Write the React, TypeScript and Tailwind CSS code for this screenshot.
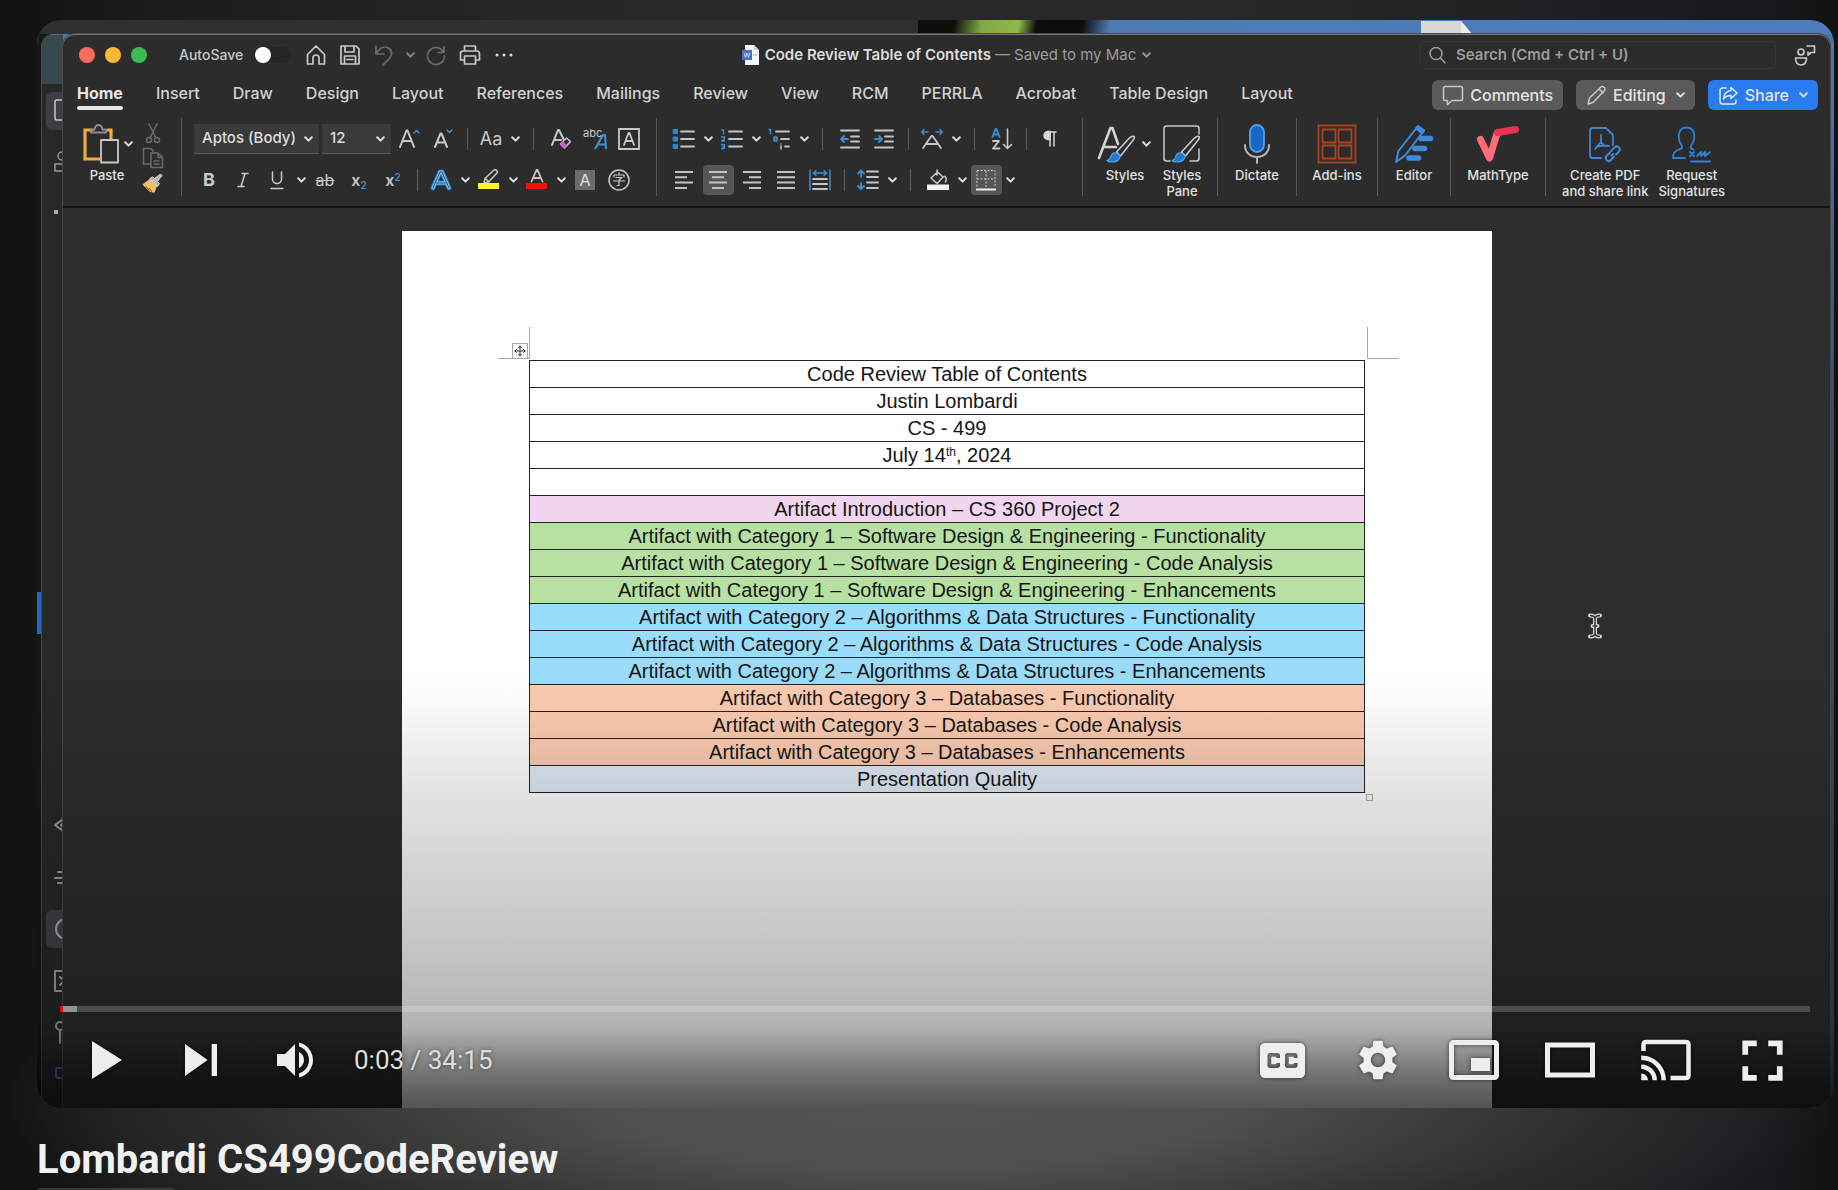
import React from "react";
import { MdCast, MdFullscreen, MdSettings, MdSkipNext, MdVolumeUp } from "react-icons/md";

type Kids = { children?: React.ReactNode };

const GREY = "#c9c9c9";
const BLUE = "#3d8fd1";

/* ---------- small building blocks ---------- */

function Svg({ w = 24, h = 24, stroke = GREY, sw = 1.5, children }: Kids & { w?: number; h?: number; stroke?: string; sw?: number }) {
  return (
    <svg width={w} height={h} viewBox={`0 0 ${w} ${h}`} fill="none" stroke={stroke} strokeWidth={sw} strokeLinecap="round" strokeLinejoin="round" aria-hidden="true" className="shrink-0">
      {children}
    </svg>
  );
}

function Tool({ label, active, children }: Kids & { label: string; active?: boolean }) {
  return (
    <button type="button" aria-label={label} className="flex h-[30px] w-[34px] shrink-0 items-center justify-center">
      <span className={active ? "flex h-[30px] w-[31px] items-center justify-center rounded bg-[#565656]" : "flex items-center justify-center"}>{children}</span>
    </button>
  );
}

function Chevron() {
  return (
    <svg width="9" height="6" viewBox="0 0 9 6" fill="none" stroke="#dcdcdc" strokeWidth="2" strokeLinecap="round" strokeLinejoin="round" aria-hidden="true">
      <path d="M1.2 1.2 4.5 4.6 7.8 1.2" />
    </svg>
  );
}

function More({ label }: { label: string }) {
  return (
    <button type="button" aria-label={label} className="flex h-[30px] w-3.5 shrink-0 items-center justify-center">
      <Chevron />
    </button>
  );
}

function Sep({ wide }: { wide?: boolean }) {
  return (
    <span className={wide ? "flex w-[22px] shrink-0 justify-center" : "flex w-3.5 shrink-0 justify-center"}>
      <span className="h-[22px] w-px bg-[#5a5a5a]" />
    </span>
  );
}

function Big({ label, className, icon, more }: { label: string; className: string; icon: React.ReactNode; more?: boolean }) {
  return (
    <div className={`flex flex-col items-center ${className}`}>
      <div className="flex h-10 items-center gap-1">
        <button type="button" aria-label={label}>{icon}</button>
        {more && <More label={`${label} options`} />}
      </div>
      <span className="mt-[3px] text-center text-[13px] leading-4 font-medium whitespace-pre-line text-[#e2e2e2]">{label}</span>
    </div>
  );
}

/* ---------- ribbon icons ---------- */

function Lines({ rows }: { rows: [number, number][] }) {
  return (
    <Svg w={20} h={20} sw={2} stroke="#c4c4c4">
      {rows.map(([a, b], i) => (
        <path key={i} d={`M${a} ${2 + i * 5.3}H${b}`} strokeLinecap="butt" />
      ))}
    </Svg>
  );
}

const PasteIcon = (
  <Svg w={36} h={40} sw={1.8}>
    <path d="M9 6H2v29h14M25 6h3v9" stroke="#f0ab3f" strokeWidth="3.2" strokeLinejoin="miter" />
    <path d="M8 8.500V5.500h3.500C12 2.500 13.500 1 15.500 1s3.500 1.500 4 4.500H23v3z" stroke="#8d8d8d" />
    <path d="M18 16h17v22.500H18z" fill="#2c2c2c" />
  </Svg>
);

const BrushIcon = (
  <Svg w={22} h={22}>
    <path d="M9.500 6.500 15 12l-3 8-4-1-6.500-6.500z" fill="#f2bd68" stroke="#f2bd68" />
    <path d="M4 14.500l3 3.500M7.500 16.500l2 3" stroke="#7a5520" strokeWidth="1" />
    <path d="m8 7 7.500 7.500 2-3-2-2 4.500-6-1.500-1.500-6 4.500-1.500-1.500z" fill="#b9b9b9" stroke="#d6d6d6" strokeWidth="1" />
  </Svg>
);

const StylesBrush = (
  <>
    <path d="M37 12.500c-2-1.200-3.500.5-5 2L19.500 28l4 4L35 17.500c1.500-2 3.500-3.500 2-5z" fill="#2c2c2c" stroke="#d0d0d0" strokeWidth="1.500" />
    <path d="M23 31.500c.5 4-3 6.500-8 6.500-2 0-4-.5-5-1.500 3-.5 3-2 4-4.500 1.500-4 6-4.500 9-.5z" fill="#1f7ad1" stroke="#5aa6e6" strokeWidth="1.200" />
  </>
);

function StylesIcon() {
  return (
    <Svg w={39} h={40}>
      <path d="M2 34 13.500 4h2L21 20M7 23h12" strokeWidth="2.600" stroke="#d4d4d4" />
      {StylesBrush}
    </Svg>
  );
}

function StylesPaneIcon() {
  return (
    <Svg w={40} h={40}>
      <path d="M8 37H4.500A2.500 2.500 0 0 1 2 34.500v-30A2.500 2.500 0 0 1 4.500 2h30A2.500 2.500 0 0 1 37 4.500V10M37 25v9.500A2.500 2.500 0 0 1 34.500 37H28" />
      {StylesBrush}
    </Svg>
  );
}

const MicIcon = (
  <Svg w={28} h={40} sw={1.8}>
    <rect x="7" y="1" width="14" height="27" rx="7" fill="#1668c4" stroke="#55a0e0" />
    <path d="M2 21c0 7.500 5 12 12 12s12-4.500 12-12M14 33v6" stroke="#b5b5b5" strokeWidth="2" />
  </Svg>
);

const AddInsIcon = (
  <Svg w={40} h={40} stroke="#a8431d" sw={1.8}>
    <path d="M1.500 1.500h37v37h-37zM5.500 5.500h13v13h-13zM21.500 5.500h13v13h-13zM5.500 21.500h13v13h-13zM21.500 21.500h13v13h-13z" strokeLinejoin="miter" />
  </Svg>
);

const EditorIcon = (
  <Svg w={40} h={40} stroke="#3b8be0" sw={2}>
    <path d="M27 14.500h9.500M21 24.500h9.500M15 34h9.500" strokeWidth="5.500" />
    <path d="M2 38 4.500 27 24 2l6 4.500-19 25z" fill="#2c2c2c" />
    <path d="M22 4.500 24 2l6 4.500-2 3z" fill="#3b8be0" />
  </Svg>
);

const MathIcon = (
  <Svg w={42} h={40}>
    <path d="M3.500 15.500 12.500 34 20 9.500" stroke="#ff6b7a" strokeWidth="7" />
    <path d="M20.500 8.500 38.500 5.500" stroke="#ea3350" strokeWidth="7" />
  </Svg>
);

const PdfIcon = (
  <Svg w={36} h={40} stroke="#4084d8" sw={1.8}>
    <path d="M14 34H6a3 3 0 0 1-3-3V7a3 3 0 0 1 3-3h13l7 7v10" />
    <path d="M14 11v7l-6 7M14 18l3 3.500 5 .500M10 22.500l7-1" />
    <path d="m24 27 3.500-3.500c3-3 7 1 4.500 4L29 30.500M26 30l-1.500 1.500M27 32.500 24 36c-3 3-7-1-4.500-4l3.500-3.500" strokeWidth="2" />
  </Svg>
);

const SignIcon = (
  <Svg w={42} h={40} stroke="#2f80e0" sw={1.8}>
    <path d="M14 34H2c0-5 1.500-6.500 5-8 4-1.500 5-2.500 3.500-5C6.500 16 6 3.500 15.500 3.500S24.500 16 20.500 21c-1.500 2.500-1 3.500 2 4.500" />
    <path d="m19 28 4 4m0-4-4 4M26 32l4-4v4l4-4v4l5-4M20 37.500h19" />
  </Svg>
);

/* ---------- Word window ---------- */

const TABS = ["Home", "Insert", "Draw", "Design", "Layout", "References", "Mailings", "Review", "View", "RCM", "PERRLA", "Acrobat", "Table Design", "Layout"];

function TitleBar() {
  return (
    <div className="grid h-10 grid-cols-[1fr_auto_1fr] items-center pt-0.5">
      <div className="flex items-center pl-4">
        <div className="flex gap-2.5">
          <button type="button" aria-label="Close" className="size-4 rounded-full bg-[#fd6a5e]" />
          <button type="button" aria-label="Minimize" className="size-4 rounded-full bg-[#fdb92f]" />
          <button type="button" aria-label="Zoom" className="size-4 rounded-full bg-[#39bc52]" />
        </div>
        <label className="ml-8 flex items-center gap-3 text-sm font-medium text-[#c8c8c8]">
          AutoSave
          <input type="checkbox" role="switch" className="peer sr-only" />
          <span className="flex h-4 w-9 rounded-full bg-[#262626]">
            <span className="size-4 rounded-full bg-white" />
          </span>
        </label>
        <div className="ml-2 flex">
          <Tool label="Home">
            <Svg sw={1.7}><path d="M3.500 11.500 12 3l8.500 8.500v9.500H15v-6a3 3 0 0 0-6 0v6H3.500z" /></Svg>
          </Tool>
          <Tool label="Save">
            <Svg sw={1.7}><path d="M3 3h15l3 3v15H3zM7 3v6h9V3M6.500 21v-8h11v8M9 16.500h6" /></Svg>
          </Tool>
          <Tool label="Undo">
            <Svg stroke="#6c6c6c" sw={1.7}><path d="M4 3v8h8M4 10.500C8 4 13 2.500 17 5.500s3 7.500 0 10.500L11 22" /></Svg>
          </Tool>
          <span className="flex w-[18px] items-center justify-center opacity-50"><Chevron /></span>
          <Tool label="Redo">
            <Svg stroke="#6c6c6c" sw={1.7}><path d="M20 3.500v6h-6M19.500 9A8.500 8.500 0 1 0 20.500 13" /></Svg>
          </Tool>
          <Tool label="Print">
            <Svg sw={1.7}><path d="M6.500 8V3h11v5M6.500 17H2.500V10.500a2.500 2.500 0 0 1 2.500-2.500h14a2.500 2.500 0 0 1 2.500 2.500V17h-4M6.500 13h11v8h-11z" /></Svg>
          </Tool>
          <Tool label="More commands">
            <Svg w={18} h={6}><path d="M2 3h.01M9 3h.01M16 3h.01" strokeWidth="3" stroke="#dcdcdc" /></Svg>
          </Tool>
        </div>
      </div>
      <div className="flex items-center text-[15px] text-[#9d9d9d]">
        <svg width="17" height="20" viewBox="0 0 17 20" className="mr-1.5" aria-hidden="true">
          <path d="M3 0h9l5 5v15H3z" fill="#f4f6fb" />
          <path d="M12 0v5h5z" fill="#c5cde0" />
          <path d="M0 5h10v10H0z" fill="#4a6fc4" />
          <path d="m2 7.500 1.500 5L5 8l1.500 4.500 1.500-5" stroke="#c8d6f5" fill="none" />
          <path d="M11 10h4" stroke="#9bb0e0" />
        </svg>
        <span className="font-semibold text-[#dedede]">Code Review Table of Contents</span>
        <span className="mr-1.5 ml-1">— Saved to my Mac</span>
        <span className="opacity-60"><Chevron /></span>
      </div>
      <div className="flex items-center justify-end gap-[18px] pr-3.5">
        <label className="flex h-7 w-[356px] items-center gap-2.5 rounded border border-[#353535] pl-2">
          <Svg w={17} h={19} stroke="#9c9c9c"><path d="M13 7.500a6 6 0 1 1-12 0 6 6 0 0 1 12 0M11.500 12l4.500 5" /></Svg>
          <input type="search" aria-label="Search" placeholder="Search (Cmd + Ctrl + U)" className="min-w-0 flex-1 bg-transparent text-[15px] font-semibold outline-none placeholder:text-[#9c9c9c]" />
        </label>
        <button type="button" aria-label="Collaborators">
          <Svg w={22} h={22} sw={1.7}>
            <circle cx="7" cy="8" r="3" />
            <path d="M1.500 14h11c0 4.500-2 7-5.500 7s-5.500-2.500-5.500-7zM13 2h7.500v6.500H17l-3 2.500V8" />
          </Svg>
        </button>
      </div>
    </div>
  );
}

function TabRow() {
  return (
    <div className="flex h-[42px] items-start justify-between pr-3 pl-3.5">
      <nav aria-label="Ribbon tabs" className="flex items-start gap-[33px] pt-[7px]">
        {TABS.map((t, i) => (
          <button key={i} type="button" className={i === 0 ? "text-base leading-6 font-bold text-[#e6e6e6]" : "text-base leading-6 font-medium text-[#d2d2d2]"}>
            {t}
            {i === 0 && <span className="mt-px block h-1 rounded-full bg-[#e6e6e6]" />}
          </button>
        ))}
      </nav>
      <div className="flex gap-[13px] pt-1.5 text-base font-medium text-[#e4e4e4]">
        <button type="button" className="flex h-[30px] items-center gap-1.5 rounded-md bg-[#5a5a5a] px-2.5">
          <Svg w={22} h={22}><path d="M3 2.500h16a1.500 1.500 0 0 1 1.500 1.500v11a1.500 1.500 0 0 1-1.500 1.500H10l-4.500 4v-4H3A1.500 1.500 0 0 1 1.500 15V4A1.500 1.500 0 0 1 3 2.500z" /></Svg>
          Comments
        </button>
        <button type="button" className="flex h-[30px] items-center gap-1.5 rounded-md bg-[#5a5a5a] px-2.5">
          <Svg w={21} h={21}><path d="m2 19 1.500-6L15 2c2-1.500 5 1 3.500 3.500L7 17.500zM13 4l4 4" /></Svg>
          <span className="mr-1">Editing</span>
          <Chevron />
        </button>
        <button type="button" className="flex h-[30px] items-center gap-1.5 rounded-md bg-[#2a7bf0] px-2.5">
          <Svg w={21} h={21} stroke="#e4ecf8"><path d="M8 3H4.500A2.500 2.500 0 0 0 2 5.500v11A2.500 2.500 0 0 0 4.500 19h11a2.500 2.500 0 0 0 2.500-2.500V15M13 2.500 19 8l-6 5.500v-3c-3.500 0-5.500 1-7.500 3.500.5-5 3-8 7.500-8.500z" /></Svg>
          <span className="mr-1">Share</span>
          <Chevron />
        </button>
      </div>
    </div>
  );
}

function Pick({ label, value, className }: { label: string; value: string; className: string }) {
  return (
    <label className={`flex h-[30px] items-center border-b border-[#585858] bg-[#3a3a3a] pr-1.5 pl-2 ${className}`}>
      <select aria-label={label} defaultValue={value} className="min-w-0 flex-1 appearance-none bg-transparent text-[15px] font-medium text-[#dedede] outline-none">
        <option>{value}</option>
      </select>
      <Chevron />
    </label>
  );
}

function FontGroup() {
  return (
    <div className="flex h-[78px] flex-col gap-[11px] border-l border-[#555] pt-1.5 pr-2.5 pl-2.5">
      <div className="flex items-center pl-0.5">
        <Pick label="Font" value="Aptos (Body)" className="mr-[3px] w-[125px]" />
        <Pick label="Font size" value="12" className="mr-px w-[69px]" />
        <Tool label="Increase font size">
          <Svg><path d="M3 20 9.500 3.500h1L17 20M5.500 14h9" strokeWidth="2" /><path d="m17 6 2.500-2.500L22 6" stroke={BLUE} /></Svg>
        </Tool>
        <Tool label="Decrease font size">
          <Svg><path d="M4 20 9.500 6.500h1L16 20M6 15.500h8" strokeWidth="2" /><path d="m16 3 2.500 2.500L21 3" stroke={BLUE} /></Svg>
        </Tool>
        <Sep />
        <Tool label="Change case"><span className="text-lg text-[#c9c9c9]">Aa</span></Tool>
        <More label="Case options" />
        <Sep wide />
        <Tool label="Clear formatting">
          <Svg><path d="M3 18 9 3h1l4.500 9M5 13h7" strokeWidth="2" /><path d="m11.500 17 6-6 4 3.500-6 6.500z" /><path d="m11.500 17 2-2 4 4-2 2z" fill="#c455c4" stroke="#d06ad0" /></Svg>
        </Tool>
        <Tool label="Text style">
          <svg width="26" height="24" viewBox="0 0 26 24" fill="none" aria-hidden="true">
            <text x="1" y="10" fontSize="11" fill={GREY} fontFamily="Inter, sans-serif">abc</text>
            <path d="m13 22 8-14h2l1 14M15.500 17.500h8" stroke={BLUE} strokeWidth="2.200" />
          </svg>
        </Tool>
        <Tool label="Character border">
          <Svg><path d="M2 2h20v20H2z" strokeWidth="1.800" strokeLinejoin="miter" /><path d="m7 18 4.500-12h1L17 18M8.500 14h7" strokeWidth="1.800" /></Svg>
        </Tool>
      </div>
      <div className="flex items-center text-[#c9c9c9]">
        <Tool label="Bold"><span className="text-lg font-bold">B</span></Tool>
        <Tool label="Italic"><Svg w={14} h={16}><path d="M6 1.500h6M2 14.500h6M9 1.500 5 14.500" /></Svg></Tool>
        <Tool label="Underline"><Svg w={14} h={20}><path d="M2.500 2v7c0 6 9 6 9 0V2M1 18.500h12" /></Svg></Tool>
        <More label="Underline options" />
        <Tool label="Strikethrough"><span className="text-base line-through">ab</span></Tool>
        <Tool label="Subscript"><span className="text-base font-semibold">x<sub className="text-[10px] text-[#3d8fd1]">2</sub></span></Tool>
        <Tool label="Superscript"><span className="text-base font-semibold">x<sup className="text-[10px] text-[#3d8fd1]">2</sup></span></Tool>
        <Sep />
        <Tool label="Text effects">
          <Svg><path d="M4 20 11 4h2l7 16M7.500 15h9" stroke="#2277c8" strokeWidth="5" /><path d="M4 20 11 4h2l7 16M7.500 15h9" stroke="#8cc4f0" strokeWidth="3" /><path d="M4 20 11 4h2l7 16M7.500 15h9" stroke="#1c4e80" strokeWidth="1" /></Svg>
        </Tool>
        <More label="Text effect options" />
        <Tool label="Highlight">
          <Svg><path d="m7 14 1.500-4L17 2c2-1 4 1 3 3l-8 8.500L8 15zM8 10l4 4" /><path d="M1 15h21v6H1z" fill="#f8f32a" stroke="none" /></Svg>
        </Tool>
        <More label="Highlight colors" />
        <Tool label="Font color">
          <Svg><path d="m6.500 13.500 5-11.500h1l5 11.500M8 10h8" strokeWidth="1.800" /><path d="M1 15h21v6H1z" fill="#f4100c" stroke="none" /></Svg>
        </Tool>
        <More label="Font colors" />
        <Tool label="Character shading"><span className="flex size-5 items-center justify-center bg-[#6b6b6b] text-base text-[#e0e0e0]">A</span></Tool>
        <Tool label="Enclose characters">
          <Svg><circle cx="12" cy="12" r="10" /><path d="M12 4.500v2M7 9V7h10v2M9 9.500h6l-3 2.500v5.500h-2M6.500 13h11" strokeWidth="1.200" /></Svg>
        </Tool>
      </div>
    </div>
  );
}

function ParagraphGroup() {
  const rows = <path d="M9 4.500h13M9 12h13M9 19.500h13" stroke="#c4c4c4" strokeWidth="1.800" />;
  return (
    <div className="flex h-[78px] flex-col gap-[11px] border-l border-[#555] pt-1.5 pr-[15px] pl-2.5">
      <div className="flex items-center">
        <Tool label="Bullets">
          <Svg>{rows}<path d="M1.500 2.500h4v4h-4zM1.500 10h4v4h-4zM1.500 17.500h4v4h-4z" fill="#2f86cf" stroke="#2f86cf" strokeWidth="1" /></Svg>
        </Tool>
        <More label="Bullet options" />
        <Tool label="Numbering">
          <Svg>{rows}<path d="M2 3h1.500v4M1.500 10h3v2l-3 2h3M1.500 17.500h3v4h-3m1-2h2" stroke={BLUE} strokeWidth="1.300" /></Svg>
        </Tool>
        <More label="Numbering options" />
        <Tool label="Multilevel list">
          <Svg><path d="M8 4.500h13M13 12h8M17 19.500h4" stroke="#c4c4c4" strokeWidth="1.800" /><path d="M1 2.500h1.500v4M6 14v-4h3v4H6m0-2h3" stroke={BLUE} strokeWidth="1.500" /><path d="M13 17v.1M13 19v3" /></Svg>
        </Tool>
        <More label="List options" />
        <Sep wide />
        <Tool label="Decrease indent">
          <Svg><path d="M3 3.500h18M13 9.500h8M13 14.500h8M3 20.500h18" stroke="#c4c4c4" strokeWidth="1.800" /><path d="M10 12H3m3-3-3 3 3 3" stroke={BLUE} strokeWidth="1.800" /></Svg>
        </Tool>
        <Tool label="Increase indent">
          <Svg><path d="M3 3.500h18M13 9.500h8M13 14.500h8M3 20.500h18" stroke="#c4c4c4" strokeWidth="1.800" /><path d="M3 12h7M7 9l3 3-3 3" stroke={BLUE} strokeWidth="1.800" /></Svg>
        </Tool>
        <Sep />
        <Tool label="Text direction">
          <Svg><path d="m3 21 8.500-12h1L21 21M7 17h10" strokeWidth="1.800" /><path d="M8 5H1.500M4 2.500 1.500 5 4 7.500M16 5h6.500M20 2.500 22.500 5 20 7.500" stroke={BLUE} /></Svg>
        </Tool>
        <More label="Text direction options" />
        <Sep wide />
        <Tool label="Sort">
          <Svg><path d="M2.500 10 5.500 2h1l3 8M3.500 7.500h5" stroke={BLUE} strokeWidth="1.800" /><path d="M3 14h6l-6 7.500h6.500" strokeWidth="1.800" /><path d="M17.500 2v19M13.500 17.500l4 4 4-4" strokeWidth="1.600" /></Svg>
        </Tool>
        <Sep />
        <Tool label="Show paragraph marks">
          <Svg w={16} h={18}><path d="M8 2v14M12 2v14M7 2h7" stroke="#d6d6d6" /><path d="M8 1.500H6a4 4 0 0 0 0 8h2z" fill="#d6d6d6" stroke="#d6d6d6" /></Svg>
        </Tool>
      </div>
      <div className="flex items-center">
        <Tool label="Align left"><Lines rows={[[1, 19], [1, 13], [1, 19], [1, 13]]} /></Tool>
        <Tool label="Center" active><Lines rows={[[1, 19], [4, 16], [1, 19], [4, 16]]} /></Tool>
        <Tool label="Align right"><Lines rows={[[1, 19], [7, 19], [1, 19], [7, 19]]} /></Tool>
        <Tool label="Justify"><Lines rows={[[1, 19], [1, 19], [1, 19], [1, 19]]} /></Tool>
        <Tool label="Distribute">
          <Svg><path d="M2 2v20M22 2v20M5 5h14M8 2.500 5.500 5 8 7.500M16 2.500 18.500 5 16 7.500" stroke={BLUE} /><path d="M5 11h14M5 16h14M5 21h14" stroke="#c4c4c4" strokeWidth="1.800" /></Svg>
        </Tool>
        <Sep />
        <Tool label="Line spacing">
          <Svg><path d="M11 3.500h11M11 9h11M11 14.500h11M11 20h11" stroke="#c4c4c4" strokeWidth="1.800" /><path d="M5 3v6M2 5.500 5 2.500l3 3M5 21v-6M2 18l3 3 3-3" stroke={BLUE} strokeWidth="1.800" /></Svg>
        </Tool>
        <More label="Line spacing options" />
        <Sep wide />
        <Tool label="Shading">
          <Svg><path d="M11 2v5M5 10l6.500-6 5.500 5-6 6.500zM17 9c3-2 4 2 2.500 5" /><path d="M1 16.500h22V22H1z" fill="#f2f2f2" stroke="none" /></Svg>
        </Tool>
        <More label="Shading colors" />
        <Tool label="Borders" active>
          <Svg><path d="M3 2.500h18v17M3 2.500v17M12 3v16M3 11h18" strokeDasharray="2 1.500" strokeWidth="1" strokeLinecap="butt" /><path d="M2 21.500h20" stroke="#f0f0f0" strokeWidth="2" strokeLinecap="butt" /></Svg>
        </Tool>
        <More label="Border options" />
      </div>
    </div>
  );
}

function Ribbon() {
  return (
    <div className="flex h-[92px] border-b-2 border-[#131313] pt-0.5">
      <div className="flex h-[78px] w-[118px] pt-1.5 pl-5">
        <div className="w-12">
          <div className="flex h-10 items-center gap-0.5">
            <button type="button" aria-label="Paste">{PasteIcon}</button>
            <More label="Paste options" />
          </div>
          <span className="mt-[3px] block w-12 text-center text-[13px] leading-4 font-medium text-[#e2e2e2]">Paste</span>
        </div>
        <div className="-mt-1.5 ml-1.5 flex flex-col pt-0.5">
          <button type="button" aria-label="Cut" className="flex h-[27px] w-8 items-center justify-center">
            <Svg w={16} h={22} stroke="#6a6a6a"><path d="M4 2l7 14M12 2 5 16" /><circle cx="4" cy="18" r="2.500" /><circle cx="12" cy="18" r="2.500" /></Svg>
          </button>
          <button type="button" aria-label="Copy" className="flex h-[27px] w-8 items-center justify-center">
            <Svg w={22} h={22} stroke="#6a6a6a"><path d="M8 17H1.500V1.500H9l2 2V6M9 6h7l4.500 4.500v10H9zM16 6v4.500h4.500M12 14h5M12 17h5" /></Svg>
          </button>
          <button type="button" aria-label="Format painter" className="flex h-[27px] w-8 items-center justify-center">{BrushIcon}</button>
        </div>
      </div>
      <FontGroup />
      <ParagraphGroup />
      <div className="flex h-[78px] border-l border-[#555] pt-1.5 pr-2.5 pl-2.5">
        <Big label="Styles" className="w-16" icon={<StylesIcon />} more />
        <Big label={"Styles\nPane"} className="w-[50px]" icon={<StylesPaneIcon />} />
      </div>
      <Big label="Dictate" className="h-[78px] w-[79px] border-l border-[#555] pt-1.5" icon={MicIcon} />
      <Big label="Add-ins" className="h-[78px] w-[81px] border-l border-[#555] pt-1.5" icon={AddInsIcon} />
      <Big label="Editor" className="h-[78px] w-[73px] border-l border-[#555] pt-1.5" icon={EditorIcon} />
      <Big label="MathType" className="h-[78px] w-[95px] border-l border-[#555] pt-1.5" icon={MathIcon} />
      <div className="flex h-[78px] gap-2.5 border-l border-[#555] pt-1.5 pl-4">
        <Big label={"Create PDF\nand share link"} className="" icon={PdfIcon} />
        <Big label={"Request\nSignatures"} className="" icon={SignIcon} />
      </div>
    </div>
  );
}

const ROWS: [React.ReactNode, string][] = [
  ["Code Review Table of Contents", "bg-white"],
  ["Justin Lombardi", "bg-white"],
  ["CS - 499", "bg-white"],
  [<>July 14<sup className="text-xs">th</sup>, 2024</>, "bg-white"],
  ["", "bg-white"],
  ["Artifact Introduction – CS 360 Project 2", "bg-[#f2d5ee]"],
  ["Artifact with Category 1 – Software Design & Engineering - Functionality", "bg-[#b7e1a3]"],
  ["Artifact with Category 1 – Software Design & Engineering - Code Analysis", "bg-[#b7e1a3]"],
  ["Artifact with Category 1 – Software Design & Engineering - Enhancements", "bg-[#b7e1a3]"],
  ["Artifact with Category 2 – Algorithms & Data Structures - Functionality", "bg-[#99dcfb]"],
  ["Artifact with Category 2 – Algorithms & Data Structures - Code Analysis", "bg-[#99dcfb]"],
  ["Artifact with Category 2 – Algorithms & Data Structures - Enhancements", "bg-[#99dcfb]"],
  ["Artifact with Category 3 – Databases - Functionality", "bg-[#fbcbb0]"],
  ["Artifact with Category 3 – Databases - Code Analysis", "bg-[#fbcbb0]"],
  ["Artifact with Category 3 – Databases - Enhancements", "bg-[#fbcbb0]"],
  ["Presentation Quality", "bg-[#e0eaf6]"],
];

function Document() {
  return (
    <div className="relative flex min-h-0 flex-1 justify-center overflow-hidden bg-[#2d2d2d] pt-[23px] pl-px">
      <div className="w-[1090px] max-w-full bg-white px-[127px] pt-[129px]">
        <div className="relative">
          <span className="absolute -top-[33px] left-0 h-8 w-px bg-[#a8a8a8]" />
          <span className="absolute -top-0.5 -left-[31px] h-px w-[31px] bg-[#a8a8a8]" />
          <span className="absolute -top-[33px] -right-[3px] h-8 w-px bg-[#a8a8a8]" />
          <span className="absolute -top-0.5 -right-[34px] h-px w-8 bg-[#a8a8a8]" />
          <span className="absolute -top-[17px] -left-[17px] flex size-4 items-center justify-center border border-[#a8a8a8] bg-white">
            <Svg w={12} h={12} stroke="#333" sw={1}><path d="M6 1v10M1 6h10M4.500 2.500 6 1l1.500 1.500M4.500 9.500 6 11l1.500-1.500M2.500 4.500 1 6l1.500 1.500M9.500 4.500 11 6 9.500 7.500" /></Svg>
          </span>
          <span className="absolute -right-2 -bottom-2 size-[7px] border border-[#a8a8a8] bg-white" />
          <table className="w-full border-collapse border border-[#222] text-center font-['Liberation_Sans',sans-serif] text-[20px] leading-[26px] text-[#151515]">
            <tbody>
              {ROWS.map(([text, bg], i) => (
                <tr key={i} className={bg}>
                  <td className="h-[27px] border border-[#222] p-0 whitespace-nowrap [&>sup]:leading-none">{text}</td>
                </tr>
              ))}
            </tbody>
          </table>
        </div>
      </div>
      <svg width="14" height="26" viewBox="0 0 14 26" fill="none" className="absolute top-[405px] left-[86.300%]" aria-hidden="true">
        <path d="M2 2.500c3 0 5 .5 5 3.500 0-3 2-3.500 5-3.500M7 6v14M4.500 13h5M2 23.500c3 0 5-.5 5-3.500 0 3 2 3.500 5 3.500" stroke="#d8d8d8" strokeWidth="4" strokeLinecap="round" />
        <path d="M2 2.500c3 0 5 .5 5 3.500 0-3 2-3.500 5-3.500M7 6v14M4.500 13h5M2 23.500c3 0 5-.5 5-3.500 0 3 2 3.500 5 3.500" stroke="#333" strokeWidth="1.500" />
      </svg>
    </div>
  );
}

/* Slice of the editor window that sits behind Word */
function BackWindow() {
  return (
    <div className="flex w-[22px] flex-col overflow-hidden rounded-tl-xl rounded-bl-xl border-l border-[#4a4a4a] bg-[#272828]">
      <div className="h-[50px] shrink-0 border-t border-[#5d6b70] bg-[#38484f]" />
      <div className="mt-2 ml-1 flex h-[38px] shrink-0 items-center rounded-l-md bg-[#3c3f41] pl-2">
        <Svg><path d="M10 1H3a2 2 0 0 0-2 2v16a2 2 0 0 0 2 2h12" /></Svg>
      </div>
      <div className="mt-5 ml-3 shrink-0"><Svg stroke="#999"><circle cx="8" cy="6" r="4" /><path d="M1 14h12v7H1z" /></Svg></div>
      <div className="mt-9 ml-3 size-1 shrink-0 bg-[#aaa]" />
      <div className="flex-1" />
      <div className="mb-7 ml-1 flex shrink-0 flex-col gap-3.5">
        <div className="flex h-[38px] items-center pl-2"><Svg stroke="#a0a0a0" sw={2}><path d="M12 4 1 12l11 8M12 8l-5 4 5 4" /></Svg></div>
        <div className="flex h-[38px] items-center pl-2"><Svg stroke="#a0a0a0" sw={2}><path d="M4 7h12M1 13h12M4 18h12M9 4v16" /></Svg></div>
        <div className="flex h-[38px] items-center rounded-l-md bg-[#404449] pl-2"><Svg stroke="#b0b0b0" sw={2}><circle cx="12" cy="12" r="10" /></Svg></div>
        <div className="flex h-[38px] items-center pl-2"><Svg stroke="#a8a8a8" sw={2}><path d="M1 2h14v20H1zM6 8l4 4-4 4" /></Svg></div>
        <div className="flex h-[38px] items-center pl-2"><Svg stroke="#a8a8a8" sw={2}><circle cx="6" cy="5" r="4" /><path d="M6 9v13" /></Svg></div>
        <div className="flex h-3.5 items-center pl-2"><Svg h={14} stroke="#5a5ac0" sw={2}><path d="M10 2H4a2 2 0 0 0-2 2v6a2 2 0 0 0 2 2h6" /></Svg></div>
      </div>
    </div>
  );
}

/* ---------- video controls ---------- */

function Control({ label, narrow, children }: Kids & { label: string; narrow?: boolean }) {
  return (
    <button
      type="button"
      aria-label={label}
      className={
        narrow
          ? "flex h-24 w-[94px] items-center justify-center drop-shadow-[0_0_2px_rgba(0,0,0,0.6)]"
          : "flex h-24 w-24 items-center justify-center drop-shadow-[0_0_2px_rgba(0,0,0,0.6)]"
      }
    >
      {children}
    </button>
  );
}

function Controls() {
  return (
    <div className="absolute right-6 bottom-0 left-[23px] text-[#eeeeee]">
      <div className="relative flex h-1.5 w-full bg-white/20">
        <span className="w-[3px] bg-[#ff0000]" />
        <span className="w-3.5 bg-white/40" />
        <input type="range" aria-label="Seek" min={0} max={2055} defaultValue={3} className="absolute inset-0 h-1.5 w-full cursor-pointer opacity-0" />
      </div>
      <div className="flex h-24 items-center">
        <Control label="Play" narrow>
          <svg width="30" height="38" viewBox="0 0 30 38" aria-hidden="true"><path d="M0 0 30 19 0 38z" fill="currentColor" /></svg>
        </Control>
        <Control label="Next" narrow><MdSkipNext size={64} /></Control>
        <Control label="Mute" narrow><MdVolumeUp size={48} /></Control>
        <span className="ml-3 text-[26px] text-[#dddddd] [text-shadow:0_0_4px_rgba(0,0,0,0.5)]">0:03 / 34:15</span>
        <div className="ml-auto flex">
          <Control label="Subtitles">
            <svg width="45" height="35" viewBox="9 11 18 14" aria-hidden="true">
              <path fill="currentColor" d="M11 11C9.890 11 9 11.900 9 13v10c0 1.100.890 2 2 2h14c1.100 0 2-.9 2-2V13c0-1.110-.9-2-2-2H11zm6 6h-1.500v-.5h-2v3h2V19H17v1c0 .550-.450 1-1 1h-3c-.550 0-1-.450-1-1v-4c0-.550.450-1 1-1h3c.550 0 1 .450 1 1v1zm7 0h-1.500v-.5h-2v3h2V19H24v1c0 .550-.450 1-1 1h-3c-.550 0-1-.450-1-1v-4c0-.550.450-1 1-1h3c.550 0 1 .450 1 1v1z" />
            </svg>
          </Control>
          <Control label="Settings"><MdSettings size={48} /></Control>
          <Control label="Miniplayer">
            <svg width="50" height="40" viewBox="0 0 50 40" fill="none" aria-hidden="true">
              <rect x="2.500" y="2.500" width="45" height="35" rx="2" stroke="currentColor" strokeWidth="5" />
              <path d="M22 18h19v13H22z" fill="currentColor" />
            </svg>
          </Control>
          <Control label="Theater mode">
            <svg width="50" height="36" viewBox="0 0 50 36" fill="none" aria-hidden="true"><path d="M2.500 3h45v30h-45z" stroke="currentColor" strokeWidth="5" /></svg>
          </Control>
          <Control label="Cast"><MdCast size={54} /></Control>
          <Control label="Full screen"><MdFullscreen size={69} /></Control>
        </div>
      </div>
    </div>
  );
}

export default function App() {
  return (
    <div className="flex h-screen flex-col overflow-hidden bg-[#121212] bg-[radial-gradient(ellipse_50%_200px_at_50%_1100px,#545454_0%,#4e4f4f_35%,#2b2c2c_75%,transparent_100%),linear-gradient(90deg,#111111_0%,#1b1b1a_8%,#262726_30%,#282928_65%,#18191b_96%,#121212_100%)] pt-5 font-['Roboto',sans-serif]">
      <main className="relative mr-1 ml-[37px] flex min-h-0 flex-1 flex-col overflow-hidden rounded-3xl bg-[#161616]">
        <div className="flex h-3.5 shrink-0 bg-[#2c312f]">
          <div className="w-[49%] shrink-0" />
          <div className="flex flex-1 items-end bg-[linear-gradient(100deg,#0c0f0a_0%,#0c0f0a_4%,#7fa944_7%,#8fba4c_11%,#0b0e0c_13%,#0b0e0c_18%,#4f7ab4_21%,#4d7dbb_100%)] pl-[28%]">
            <svg width="51" height="13" viewBox="0 0 51 13" aria-hidden="true"><path d="M0 0h40l11 13H0z" fill="#d8d8d8" /><path d="M40 0 51 13H40z" fill="#eee" /></svg>
          </div>
        </div>
        <div className="flex min-h-0 flex-1 bg-[linear-gradient(180deg,#4677ae_0%,#4677ae_6%,#324f69_35%,#2c4961_100%)]">
          <div className="flex w-1 flex-col bg-[#171717]">
            <div className="h-[52%]" />
            <div className="h-[42px] bg-[#2368b8]" />
          </div>
          <div className="flex bg-[#171717]"><BackWindow /></div>
          <section aria-label="Word" className="flex min-w-0 flex-1 flex-col overflow-hidden rounded-t-xl bg-[#2c2c2c] font-['Inter',sans-serif] shadow-[0_0_0_1px_#484848,inset_0_1px_0_#7a7a7a]">
            <TitleBar />
            <TabRow />
            <Ribbon />
            <Document />
          </section>
          <div className="w-1 shrink-0" />
        </div>
        <div className="pointer-events-none absolute inset-x-0 bottom-0 h-[448px] bg-[linear-gradient(180deg,transparent_0%,rgba(0,0,0,0.02)_9%,rgba(0,0,0,0.11)_29%,rgba(0,0,0,0.24)_67%,rgba(0,0,0,0.3)_82%,rgba(0,0,0,0.47)_89%,rgba(0,0,0,0.6)_95%,rgba(0,0,0,0.67)_100%)]" />
        <Controls />
      </main>
      <footer className="h-[82px] shrink-0 pl-[37px]">
        <h1 className="pt-7 text-[40px] leading-[48px] font-bold text-[#f1f1f1]">Lombardi CS499CodeReview</h1>
        <div className="mt-1 h-2 w-[138px] rounded-t-sm bg-[#3b3b3b]" />
      </footer>
    </div>
  );
}
